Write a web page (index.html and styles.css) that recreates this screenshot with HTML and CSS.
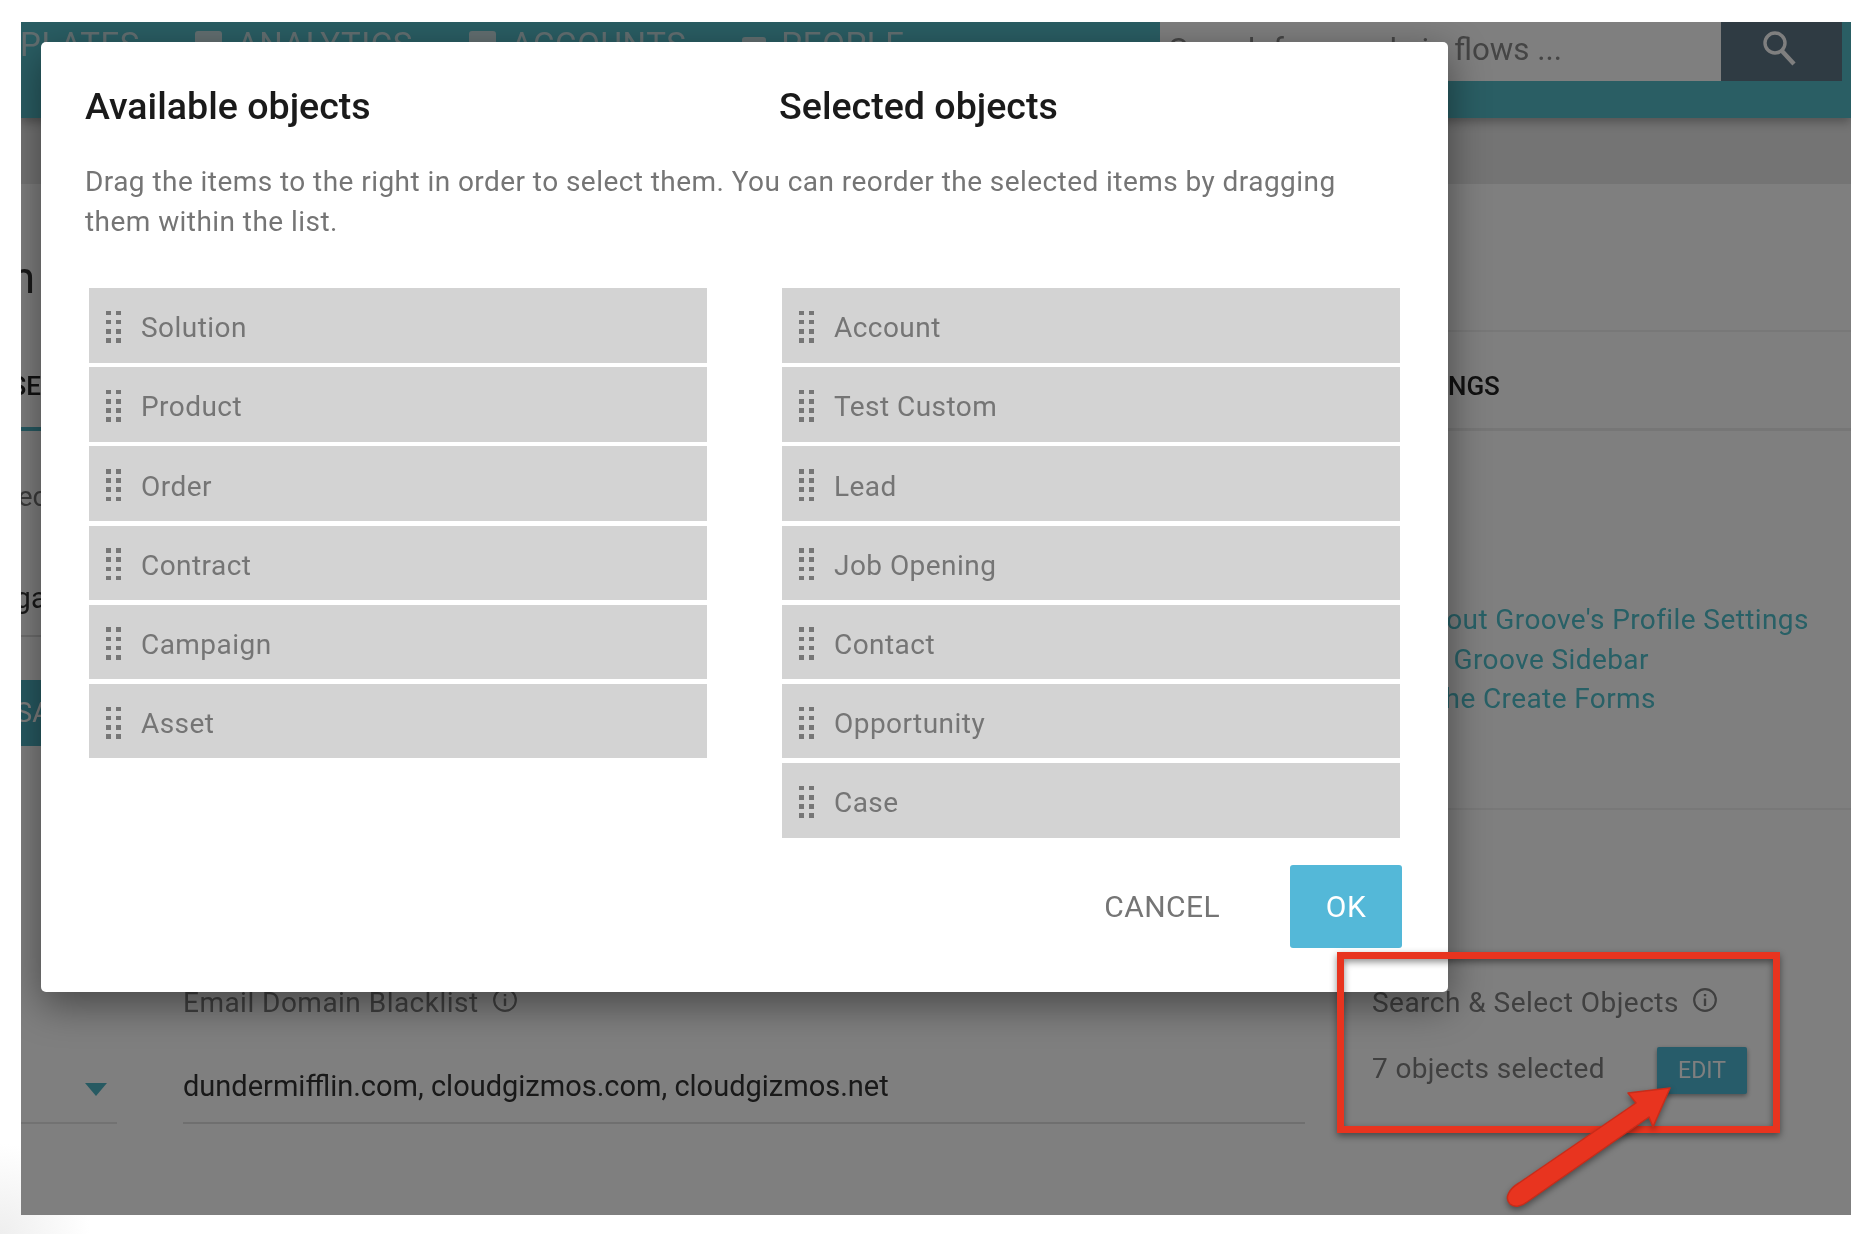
FILE: index.html
```html
<!DOCTYPE html>
<html lang="en">
<head>
<meta charset="utf-8">
<title>Available objects</title>
<link rel="stylesheet" href="styles.css">
</head>
<body>
<div class="app">
  <header class="topbar">
    <nav class="nav">
      <span class="nav-item nav-first">TEMPLATES</span>
      <span class="nav-item"><i class="nav-icon"></i>ANALYTICS</span>
      <span class="nav-item"><i class="nav-icon"></i>ACCOUNTS</span>
      <span class="nav-item nav-last"><i class="nav-icon nav-icon-small"></i>PEOPLE</span>
    </nav>
    <div class="search">
      <span class="search-input">Search for people in flows ...</span>
      <span class="search-btn">
        <svg width="40" height="40" viewBox="0 0 40 40"><circle cx="15" cy="14" r="10" fill="none" stroke="#fff" stroke-width="3.4"/><path d="M22 22 L34 35" stroke="#fff" stroke-width="4.4" fill="none"/></svg>
      </span>
    </div>
  </header>
  <div class="band"></div>
  <main class="content">
    <section class="upper">
      <div class="strip">
        <div class="strip-title"><span>Admin</span></div>
        <div class="strip-tab"><span>LICENSE</span></div>
        <div class="strip-label"><span>Selected</span></div>
        <div class="strip-value"><span>Organization</span></div>
        <div class="strip-btn"><span>SAVE</span></div>
      </div>
      <div class="side">
        <div class="side-head"></div>
        <div class="side-tabs"><span>SETTINGS</span></div>
        <div class="side-links">
          <a>Learn about Groove's Profile Settings</a>
          <a>The Groove Sidebar</a>
          <a>Use the Create Forms</a>
        </div>
      </div>
    </section>
    <section class="lower">
      <div class="caret-col"><span class="caret"></span></div>
      <div class="field">
        <div class="field-label">Email Domain Blacklist
          <svg class="info" viewBox="0 0 24 24"><circle cx="12" cy="12" r="10" fill="none" stroke="currentColor" stroke-width="2"/><path d="M12 10.5v7M12 6.5v2" stroke="currentColor" stroke-width="2.2" fill="none"/></svg>
        </div>
        <div class="field-value">dundermifflin.com, cloudgizmos.com, cloudgizmos.net</div>
      </div>
      <div class="objects">
        <div class="field-label">Search &amp; Select Objects
          <svg class="info" viewBox="0 0 24 24"><circle cx="12" cy="12" r="10" fill="none" stroke="currentColor" stroke-width="2"/><path d="M12 10.5v7M12 6.5v2" stroke="currentColor" stroke-width="2.2" fill="none"/></svg>
        </div>
        <div class="objects-row"><span>7 objects selected</span><span class="edit">EDIT</span></div>
      </div>
    </section>
  </main>
  <div class="overlay"></div>

  <section class="modal">
    <div class="modal-titles">
      <h2>Available objects</h2>
      <h2>Selected objects</h2>
    </div>
    <p class="modal-desc">Drag the items to the right in order to select them. You can reorder the selected items by dragging them within the list.</p>
    <div class="lists">
      <ul class="list">
        <li><span class="grip"><i></i><i></i><i></i><i></i><i></i><i></i><i></i><i></i></span>Solution</li>
        <li><span class="grip"><i></i><i></i><i></i><i></i><i></i><i></i><i></i><i></i></span>Product</li>
        <li><span class="grip"><i></i><i></i><i></i><i></i><i></i><i></i><i></i><i></i></span>Order</li>
        <li><span class="grip"><i></i><i></i><i></i><i></i><i></i><i></i><i></i><i></i></span>Contract</li>
        <li><span class="grip"><i></i><i></i><i></i><i></i><i></i><i></i><i></i><i></i></span>Campaign</li>
        <li><span class="grip"><i></i><i></i><i></i><i></i><i></i><i></i><i></i><i></i></span>Asset</li>
      </ul>
      <ul class="list">
        <li><span class="grip"><i></i><i></i><i></i><i></i><i></i><i></i><i></i><i></i></span>Account</li>
        <li><span class="grip"><i></i><i></i><i></i><i></i><i></i><i></i><i></i><i></i></span>Test Custom</li>
        <li><span class="grip"><i></i><i></i><i></i><i></i><i></i><i></i><i></i><i></i></span>Lead</li>
        <li><span class="grip"><i></i><i></i><i></i><i></i><i></i><i></i><i></i><i></i></span>Job Opening</li>
        <li><span class="grip"><i></i><i></i><i></i><i></i><i></i><i></i><i></i><i></i></span>Contact</li>
        <li><span class="grip"><i></i><i></i><i></i><i></i><i></i><i></i><i></i><i></i></span>Opportunity</li>
        <li><span class="grip"><i></i><i></i><i></i><i></i><i></i><i></i><i></i><i></i></span>Case</li>
      </ul>
    </div>
    <div class="modal-actions">
      <button class="btn-cancel">CANCEL</button>
      <button class="btn-ok">OK</button>
    </div>
  </section>

  <div class="callout"></div>
  <svg class="arrow" width="190" height="140" viewBox="0 0 190 140">
    <path d="M170 8 L128 13 L136 23 L19 103 C9 109 4 118 10 124 C15 128 22 126 27 122 L149 37 L153 47 Z" fill="#e8341f" stroke="#c92c1a" stroke-width="1.5" stroke-linejoin="round"/>
  </svg>
</div>
</body>
</html>
```
FILE: styles.css
```css
* { box-sizing: border-box; }
html, body { margin: 0; height: 100%; }
body {
  width: 1876px;
  height: 1234px;
  overflow: hidden;
  padding: 22px 25px 19px 21px;
  font-family: Roboto, "Noto Sans", sans-serif;
  background: radial-gradient(circle at 0 100%, #eeeeee 0, #ffffff 90px);
  filter: blur(0.6px);
}

/* underlying page */
.app {
  position: relative;
  height: 1193px;
  background: #fff;
  overflow: hidden;
  display: flex;
  flex-direction: column;
}
.overlay { position: absolute; inset: 0; background: rgba(0,0,0,.5); }

.topbar {
  height: 96px;
  flex: none;
  background: #55bcc8;
  display: flex;
  align-items: flex-start;
  box-shadow: 0 4px 10px rgba(0,0,0,.3);
  position: relative;
}
.nav { width: 1139px; flex: none; display: flex; height: 44px; align-items: center; color: #c6dfe2; font-size: 33px; letter-spacing: .6px; }
.nav-item { display: flex; align-items: center; margin-right: 56px; white-space: nowrap; }
.nav-first { width: 119px; justify-content: flex-end; margin-right: 55px; flex: none; }
.nav-last { margin-right: 0; }
.nav-icon { width: 27px; height: 27px; margin-right: 15px; background: #c6dfe2; border-radius: 3px; }
.nav-icon-small { width: 24px; height: 14px; }
.search { display: flex; flex: none; width: 682px; height: 59px; background: #fff; }
.search-input { width: 561px; color: #8a8a8a; font-size: 31.3px; line-height: 55px; padding-left: 9px; white-space: nowrap; overflow: hidden; }
.search-btn { width: 121px; background: #5e7687; display: flex; justify-content: center; align-items: flex-start; padding: 7px 4px 0 0; }

.band { height: 66px; flex: none; background: #e8e8e8; }

.content { flex: 1; display: flex; flex-direction: column; }
.upper { height: 626px; flex: none; display: flex; justify-content: space-between; }

.strip { width: 20px; flex: none; display: flex; flex-direction: column; }
.strip > div { display: flex; justify-content: flex-end; white-space: nowrap; }
.strip-title { margin-top: 64px; height: 60px; line-height: 60px; font-size: 44px; color: #333; }
.strip-title span { margin-right: 6px; }
.strip-tab { margin-top: 59px; height: 64px; line-height: 38px; font-size: 26px; color: #222; font-weight: 500; border-bottom: 4px solid #4fb5c4; }
.strip-label { margin-top: 46px; height: 40px; line-height: 40px; font-size: 28px; color: #777; }
.strip-label span { margin-right: -46px; }
.strip-value { margin-top: 61px; height: 59px; line-height: 40px; font-size: 29px; color: #333; border-bottom: 2px solid #ddd; }
.strip-value span { margin-right: -108px; }
.strip-btn { margin-top: 43px; height: 66px; line-height: 66px; background: #4fb5c4; color: #fff; font-size: 28px; }
.strip-btn span { margin-right: -42px; }

.side { width: 403px; flex: none; display: flex; flex-direction: column; }
.side-head { height: 148px; flex: none; border-bottom: 2px solid #f0f0f0; }
.side-tabs { height: 99px; flex: none; border-bottom: 3px solid #ececec; padding-top: 34px; line-height: 40px; font-size: 26px; font-weight: 500; color: #222; white-space: nowrap; display: flex; }
.side-tabs span { margin-left: -70px; }
.side-links { flex: 1; padding-top: 169px; display: flex; flex-direction: column; border-bottom: 2px solid #f0f0f0; }
.side-links a { line-height: 39.6px; font-size: 28px; letter-spacing: .4px; color: #50c0cc; white-space: nowrap; }
.side-links a:nth-child(1) { margin-left: -113px; }
.side-links a:nth-child(2) { margin-left: -50px; }
.side-links a:nth-child(3) { margin-left: -69px; }

.lower { display: flex; padding-top: 173px; height: 315px; flex: none; align-items: flex-start; }
.caret-col { width: 96px; height: 141px; flex: none; border-bottom: 2px solid #e4e4e4; margin-right: 66px; display: flex; justify-content: center; align-items: flex-end; padding: 0 0 26px 54px; }
.caret { width: 0; height: 0; border-left: 11px solid transparent; border-right: 11px solid transparent; border-top: 13px solid #4fb5c4; }
.field { width: 1122px; flex: none; margin-right: 67px; }
.field-label { height: 40px; line-height: 40px; font-size: 28px; color: #808080; white-space: nowrap; display: flex; align-items: center; gap: 13px; letter-spacing: .47px; }
.info { width: 26px; height: 26px; margin-top: -7px; }
.field-value { height: 101px; padding-top: 43px; line-height: 40px; font-size: 29px; color: #333; border-bottom: 2px solid #dedede; }
.objects { width: 375px; flex: none; }
.objects-row { margin-top: 24px; height: 47px; display: flex; justify-content: space-between; line-height: 44px; font-size: 28px; color: #808080; padding-right: 104px; letter-spacing: .35px; }
.edit { width: 90px; height: 47px; flex: none; background: #4eb8d4; color: #fff; font-size: 23px; line-height: 47px; text-align: center; border-radius: 2px; box-shadow: 0 2px 5px rgba(0,0,0,.4); margin-right: -104px; letter-spacing: 0; }

/* modal */
.modal {
  position: absolute;
  left: 20px; top: 20px;
  width: 1407px; height: 950px;
  background: #fff;
  border-radius: 5px;
  padding: 43px 46px 0 44px;
  box-shadow: 0 12px 40px rgba(0,0,0,.45);
}
.modal-titles { display: grid; grid-template-columns: 694px 1fr; }
.modal-titles h2 { margin: 0; font-size: 37.6px; line-height: 42px; font-weight: 500; color: #1a1a1a; }
.modal-desc { margin: 35px 0 0; width: 1290px; font-size: 28px; line-height: 39.5px; color: #757575; height: 79px; letter-spacing: .44px; }
.lists { margin: 47px 0 0 4px; display: grid; grid-template-columns: 618px 618px; column-gap: 75px; align-items: start; }
.list { list-style: none; margin: 0; padding: 0; display: flex; flex-direction: column; gap: 4.7px; }
.list li {
  height: 74.5px;
  background: #d3d3d3;
  display: flex;
  align-items: center;
  padding: 5px 0 0 17px;
  font-size: 28px;
  color: #757575;
  letter-spacing: .45px;
}
.grip { width: 15px; display: grid; grid-template-columns: 4.5px 4.5px; column-gap: 5.5px; row-gap: 4.7px; margin-right: 20px; margin-top: -2px; }
.grip i { width: 4.5px; height: 4.5px; background: #767676; }
.modal-actions { position: absolute; right: 46px; bottom: 44px; display: flex; align-items: center; gap: 70px; }
.btn-cancel, .btn-ok { border: 0; font-family: inherit; font-size: 30px; padding: 0; letter-spacing: .4px; }
.btn-cancel { background: none; color: #757575; font-weight: 450; }
.btn-ok { width: 112px; height: 83px; background: #54b8d8; color: #fff; border-radius: 3px; font-weight: 450; }

/* annotation */
.callout {
  position: absolute;
  left: 1316px; top: 930px;
  width: 443px; height: 181px;
  border: 7px solid #e8341f;
  box-shadow: 0 3px 7px rgba(0,0,0,.45), inset 0 3px 7px rgba(0,0,0,.45);
}
.arrow { position: absolute; left: 1479px; top: 1058px; filter: drop-shadow(0 3px 3px rgba(0,0,0,.4)); }
```
